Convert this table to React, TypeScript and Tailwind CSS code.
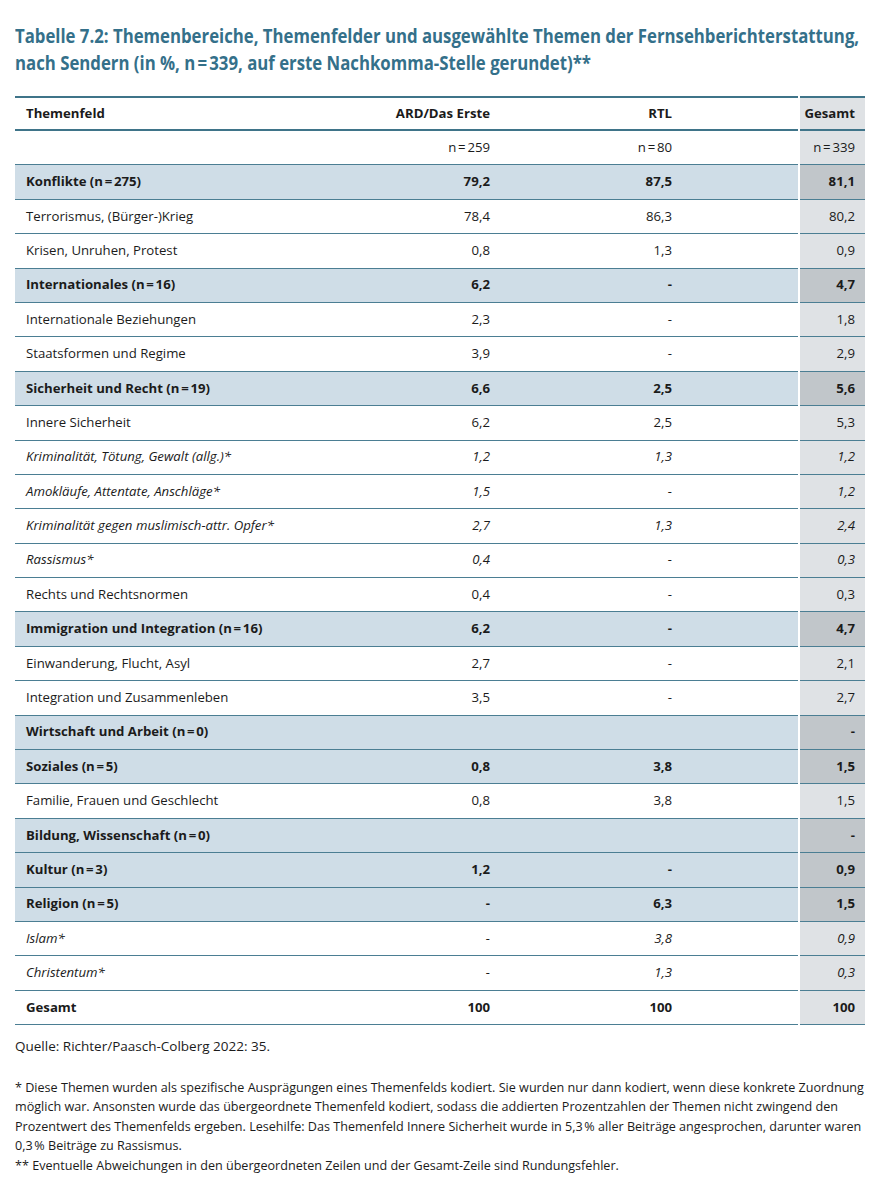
import React from 'react';

type Row = {
  label: string;
  ard: string;
  rtl: string;
  ges: string;
  kind: 'group' | 'normal' | 'italic' | 'total';
};

const rows: Row[] = [
  { label: 'Konflikte (n\u202F=\u202F275)', ard: '79,2', rtl: '87,5', ges: '81,1', kind: 'group' },
  { label: 'Terrorismus, (Bürger-)Krieg', ard: '78,4', rtl: '86,3', ges: '80,2', kind: 'normal' },
  { label: 'Krisen, Unruhen, Protest', ard: '0,8', rtl: '1,3', ges: '0,9', kind: 'normal' },
  { label: 'Internationales (n\u202F=\u202F16)', ard: '6,2', rtl: '-', ges: '4,7', kind: 'group' },
  { label: 'Internationale Beziehungen', ard: '2,3', rtl: '-', ges: '1,8', kind: 'normal' },
  { label: 'Staatsformen und Regime', ard: '3,9', rtl: '-', ges: '2,9', kind: 'normal' },
  { label: 'Sicherheit und Recht (n\u202F=\u202F19)', ard: '6,6', rtl: '2,5', ges: '5,6', kind: 'group' },
  { label: 'Innere Sicherheit', ard: '6,2', rtl: '2,5', ges: '5,3', kind: 'normal' },
  { label: 'Kriminalität, Tötung, Gewalt (allg.)*', ard: '1,2', rtl: '1,3', ges: '1,2', kind: 'italic' },
  { label: 'Amokläufe, Attentate, Anschläge*', ard: '1,5', rtl: '-', ges: '1,2', kind: 'italic' },
  { label: 'Kriminalität gegen muslimisch-attr. Opfer*', ard: '2,7', rtl: '1,3', ges: '2,4', kind: 'italic' },
  { label: 'Rassismus*', ard: '0,4', rtl: '-', ges: '0,3', kind: 'italic' },
  { label: 'Rechts und Rechtsnormen', ard: '0,4', rtl: '-', ges: '0,3', kind: 'normal' },
  { label: 'Immigration und Integration (n\u202F=\u202F16)', ard: '6,2', rtl: '-', ges: '4,7', kind: 'group' },
  { label: 'Einwanderung, Flucht, Asyl', ard: '2,7', rtl: '-', ges: '2,1', kind: 'normal' },
  { label: 'Integration und Zusammenleben', ard: '3,5', rtl: '-', ges: '2,7', kind: 'normal' },
  { label: 'Wirtschaft und Arbeit (n\u202F=\u202F0)', ard: '', rtl: '', ges: '-', kind: 'group' },
  { label: 'Soziales (n\u202F=\u202F5)', ard: '0,8', rtl: '3,8', ges: '1,5', kind: 'group' },
  { label: 'Familie, Frauen und Geschlecht', ard: '0,8', rtl: '3,8', ges: '1,5', kind: 'normal' },
  { label: 'Bildung, Wissenschaft (n\u202F=\u202F0)', ard: '', rtl: '', ges: '-', kind: 'group' },
  { label: 'Kultur (n\u202F=\u202F3)', ard: '1,2', rtl: '-', ges: '0,9', kind: 'group' },
  { label: 'Religion (n\u202F=\u202F5)', ard: '-', rtl: '6,3', ges: '1,5', kind: 'group' },
  { label: 'Islam*', ard: '-', rtl: '3,8', ges: '0,9', kind: 'italic' },
  { label: 'Christentum*', ard: '-', rtl: '1,3', ges: '0,3', kind: 'italic' },
  { label: 'Gesamt', ard: '100', rtl: '100', ges: '100', kind: 'total' },
];

const TableRow = ({ row }: { row: Row }) => {
  const group = row.kind === 'group';
  const bold = group || row.kind === 'total';
  const text = bold ? 'font-bold' : row.kind === 'italic' ? 'italic' : '';
  return (
    <div className={`flex h-[34.4px] ${text}`}>
      <div
        className={`flex-1 grid grid-cols-[370px_115px_182px_1fr] items-center border-b-[1.5px] border-[#4b7e93] ${
          group ? 'bg-[#cfdde7]' : 'bg-white'
        }`}
      >
        <span className="pl-[11px]">{row.label}</span>
        <span className="text-right pr-[10px]">{row.ard}</span>
        <span className="text-right pr-[10px]">{row.rtl}</span>
        <span />
      </div>
      <div
        className={`ml-[2px] w-[65px] flex items-center justify-end pr-[10px] border-b-[1.5px] border-[#4b7e93] ${
          group ? 'bg-[#c1c6ca]' : 'bg-[#dfe2e5]'
        }`}
      >
        {row.ges}
      </div>
    </div>
  );
};

export default function App() {
  return (
    <div
      className="w-[883px] bg-white px-[15px] pt-[22px] pb-6 text-[#1b1b1b] text-[13.2px]"
      style={{ fontFamily: '"Open Sans", "Liberation Sans", sans-serif' }}
    >
      <h1 className="text-[19.5px] leading-[27px] font-bold text-[#34708a] mb-[20px] whitespace-nowrap">
        <span className="block origin-left scale-x-[0.86]">
          Tabelle 7.2: Themenbereiche, Themenfelder und ausgewählte Themen der Fernsehberichterstattung,
        </span>
        <span className="block origin-left scale-x-[0.86]">
          nach Sendern (in %, n{'\u202F'}={'\u202F'}339, auf erste Nachkomma-Stelle gerundet)**
        </span>
      </h1>

      <div className="w-[850px]">
        {/* header */}
        <div className="flex h-[35px] font-bold">
          <div className="flex-1 grid grid-cols-[370px_115px_182px_1fr] items-center border-t-[2.5px] border-b-[2px] border-[#3f7489]">
            <span className="pl-[11px]">Themenfeld</span>
            <span className="text-right pr-[10px] whitespace-nowrap">ARD/Das Erste</span>
            <span className="text-right pr-[10px]">RTL</span>
            <span />
          </div>
          <div className="ml-[2px] w-[65px] flex items-center justify-end pr-[10px] bg-[#dfe2e5] border-t-[2.5px] border-b-[2px] border-[#3f7489]">
            Gesamt
          </div>
        </div>
        {/* n row */}
        <div className="flex h-[34.4px]">
          <div className="flex-1 grid grid-cols-[370px_115px_182px_1fr] items-center border-b-[1.5px] border-[#4b7e93]">
            <span />
            <span className="text-right pr-[10px]">n{'\u202F'}={'\u202F'}259</span>
            <span className="text-right pr-[10px]">n{'\u202F'}={'\u202F'}80</span>
            <span />
          </div>
          <div className="ml-[2px] w-[65px] flex items-center justify-end pr-[10px] bg-[#dfe2e5] border-b-[1.5px] border-[#4b7e93]">
            n{'\u202F'}={'\u202F'}339
          </div>
        </div>
        {rows.map((r) => (
          <TableRow key={r.label} row={r} />
        ))}
      </div>

      <p className="mt-[12px] leading-[19.5px] text-[13.5px]">Quelle: Richter/Paasch-Colberg 2022: 35.</p>

      <p className="mt-[21px] leading-[19.5px] text-[12.6px]">
        * Diese Themen wurden als spezifische Ausprägungen eines Themenfelds kodiert. Sie wurden nur dann kodiert, wenn
        diese konkrete Zuordnung möglich war. Ansonsten wurde das übergeordnete Themenfeld kodiert, sodass die addierten
        Prozentzahlen der Themen nicht zwingend den Prozentwert des Themenfelds ergeben. Lesehilfe: Das Themenfeld Innere
        Sicherheit wurde in 5,3{'\u202F'}% aller Beiträge angesprochen, darunter waren 0,3{'\u202F'}% Beiträge zu Rassismus.
      </p>
      <p className="leading-[19.5px] text-[12.6px]">
        ** Eventuelle Abweichungen in den übergeordneten Zeilen und der Gesamt-Zeile sind Rundungsfehler.
      </p>
    </div>
  );
}
